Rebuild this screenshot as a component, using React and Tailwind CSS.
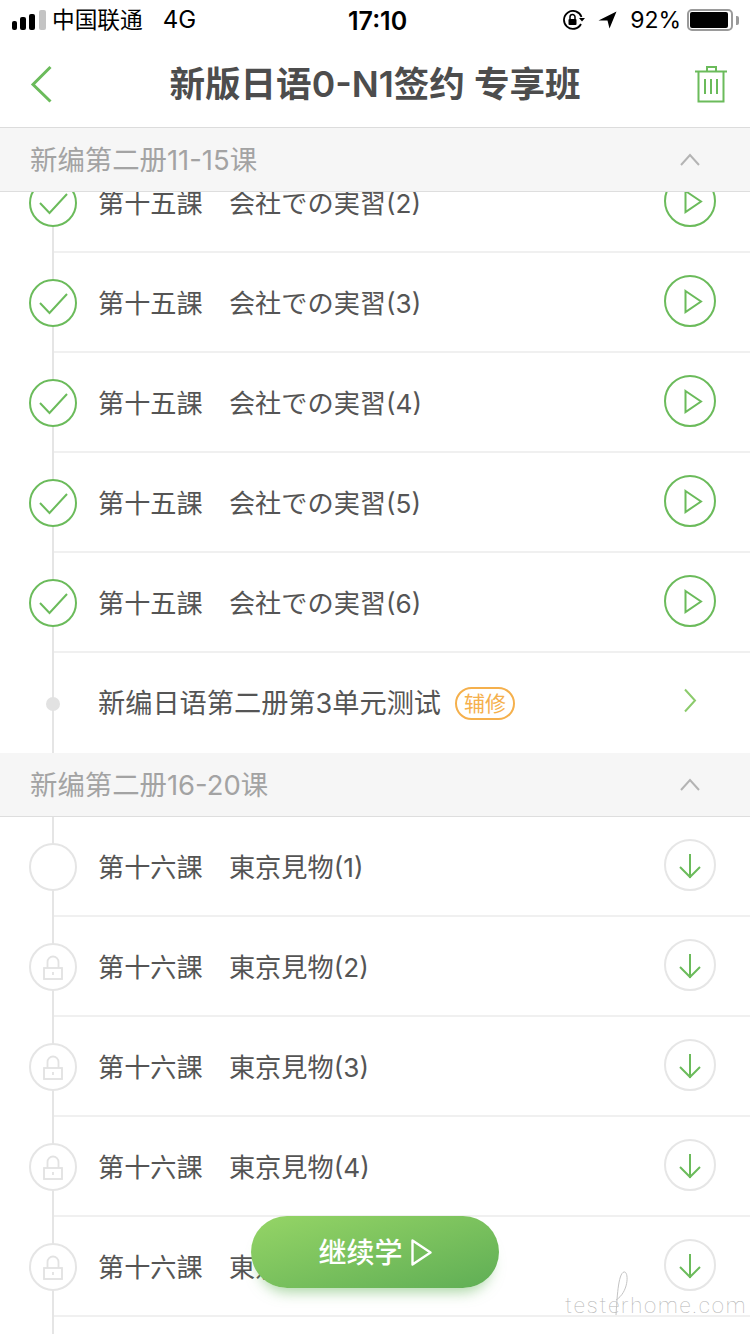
const SANS = 'font-["Inter","Noto_Sans_CJK_SC",sans-serif]';

const StatusBar = () => (
  <div className="flex h-[40px] items-center text-black relative">
    <div className="flex items-end gap-[3px] ml-[12px] h-[20px] mb-[1px]">
      <div className="w-[5px] h-[9px] rounded-[2px] bg-black" />
      <div className="w-[6px] h-[13px] rounded-[2px] bg-black" />
      <div className="w-[6px] h-[16px] rounded-[2px] bg-black" />
      <div className="w-[7px] h-[20px] ml-[1px] rounded-[2px] bg-[#c4c4c4]" />
    </div>
    <span className="ml-[6px] text-[22.7px] leading-none">中国联通</span>
    <span className="ml-[20px] text-[24px] leading-none">4G</span>
    <span className="absolute left-[348px] top-[8px] text-[25px] leading-[26px] font-semibold">17:10</span>
    <div className="ml-auto flex items-center mr-[11px]">
      <svg width="24" height="20" viewBox="0 0 24 20" fill="none">
        <path d="M19.5 7A9 9 0 1 0 19 14" stroke="#000" strokeWidth="1.8" />
        <path d="M17 8h6l-3 3.5z" fill="#000" />
        <rect x="6.5" y="9" width="8" height="6" rx="1" fill="#000" />
        <path d="M8 9V7a2.5 2.5 0 0 1 5 0v2" stroke="#000" strokeWidth="1.5" />
      </svg>
      <svg className="ml-[12px]" width="19" height="18" viewBox="0 0 19 18">
        <path d="M0.5 9.5 18.5 0.5 11.5 17.5 9.5 9.5z" fill="#000" />
      </svg>
      <span className="ml-[13px] text-[23px] leading-none">92%</span>
      <div className="ml-[6px] w-[46px] h-[22px] rounded-[5px] border-2 border-[#9a9a9a] p-[1px]">
        <div className="w-[38px] h-full rounded-[2px] bg-black" />
      </div>
      <div className="ml-[3px] w-[3px] h-[9px] rounded-r-[2px] bg-[#9a9a9a]" />
    </div>
  </div>
);

const NavBar = () => (
  <div className="flex h-[88px] items-center justify-center relative border-b border-[#dcdcdc] bg-white">
    <svg className="absolute left-[30px] top-[25px]" width="24" height="38" viewBox="0 0 24 38" fill="none">
      <path d="M20.5 2 3 19.5 20.5 36.5" stroke="#6bbb5b" strokeWidth="3" />
    </svg>
    <h1 className="text-[35.6px] leading-none font-semibold text-[#4d4d4d] pt-[2px]">新版日语0-N1签约 专享班</h1>
    <svg className="absolute left-[695px] top-[26px]" width="32" height="37" viewBox="0 0 32 37" fill="none" stroke="#6bbb5b" strokeWidth="2">
      <path d="M12 5V1h9v4" />
      <path d="M0 5.5h32" />
      <path d="M3.5 5.5V35.5h25V5.5" />
      <path d="M10 13v15M16 13v15M22 13v15" />
    </svg>
  </div>
);

const SectionHeader = ({ title, className = '' }) => (
  <div className={`relative z-20 flex h-[64px] items-center justify-between bg-[#f6f6f6] border-b border-[#dedede] pl-[30px] pr-[50px] ${className}`}>
    <span className="text-[27.4px] leading-none text-[#a3a3a3] pt-[2px]">{title}</span>
    <svg width="20" height="13" viewBox="0 0 20 13" fill="none">
      <path d="M1 12 10 2l9 10" stroke="#b4b4b4" strokeWidth="2" />
    </svg>
  </div>
);

const DoneMark = () => (
  <div className="relative z-10 shrink-0 w-[48px] h-[48px] -ml-[24px] rounded-full bg-white border-2 border-[#6bbb5b]">
    <svg className="-m-[2px]" width="48" height="48" viewBox="0 0 48 48" fill="none">
      <path d="M11 24l9.5 10L38 15" stroke="#6bbb5b" strokeWidth="2" />
    </svg>
  </div>
);

const EmptyMark = () => (
  <div className="relative z-10 shrink-0 w-[48px] h-[48px] -ml-[24px] rounded-full bg-white border-2 border-[#e5e5e5]" />
);

const LockMark = () => (
  <div className="relative z-10 shrink-0 w-[48px] h-[48px] -ml-[24px] rounded-full bg-white border-2 border-[#e5e5e5]">
    <svg className="-m-[2px]" width="48" height="48" viewBox="0 0 48 48" fill="none" stroke="#e2e2e2" strokeWidth="1.8">
      <rect x="15" y="25" width="18" height="11" />
      <path d="M18.5 25v-6a5.5 5.5 0 0 1 11 0v6" />
      <path d="M24 29v3" />
    </svg>
  </div>
);

const PlayButton = () => (
  <div className="shrink-0 ml-auto mr-[34px] mb-[4px] w-[52px] h-[52px] rounded-full border-2 border-[#6bbb5b]">
    <svg className="-m-[2px]" width="52" height="52" viewBox="0 0 52 52" fill="none">
      <path d="M21.5 16 37 26.5 21.5 37z" stroke="#6bbb5b" strokeWidth="2" />
    </svg>
  </div>
);

const DownloadButton = () => (
  <div className="shrink-0 ml-auto mr-[34px] mb-[4px] w-[52px] h-[52px] rounded-full border-2 border-[#e6e6e6]">
    <svg className="-m-[2px]" width="52" height="52" viewBox="0 0 52 52" fill="none" stroke="#6bbb5b" strokeWidth="2">
      <path d="M26 15v24" />
      <path d="M16 28l10 10 10-10" />
    </svg>
  </div>
);

const Row = ({ mark, title, action, className = '' }) => (
  <div className={`relative flex items-center h-[100px] ml-[53px] pt-[2px] border-b-2 border-[#f0f0f0] ${className}`}>
    <div className="absolute -left-px top-0 -bottom-[2px] w-[2px] bg-[#e5e5e5]" />
    {mark}
    <span className="ml-[21px] text-[26.2px] leading-none text-[#555] pt-[3px]">{title}</span>
    {action}
  </div>
);

const App = () => {
  const done = [2, 3, 4, 5, 6];
  const pending = [1, 2, 3, 4, 5];

  return (
    <div className={`relative w-[750px] h-[1334px] overflow-hidden bg-white ${SANS}`}>
      <StatusBar />
      <NavBar />
      <SectionHeader title="新编第二册11-15课" />

      {done.map((n, i) => (
        <Row
          key={n}
          className={i === 0 ? '-mt-[39px]' : ''}
          mark={<DoneMark />}
          title={`第十五課　会社での実習(${n})`}
          action={<PlayButton />}
        />
      ))}

      <div className="relative flex items-center h-[100px] ml-[53px]">
        <div className="absolute -left-px inset-y-0 w-[2px] bg-[#e5e5e5]" />
        <div className="relative z-10 -ml-[7px] w-[14px] h-[14px] mt-[2px] rounded-full bg-[#e2e2e2]" />
        <span className="ml-[38px] text-[27.2px] leading-none text-[#555] pt-[1px]">新编日语第二册第3单元测试</span>
        <span className="ml-[14px] flex items-center justify-center w-[60px] h-[33px] rounded-full border-2 border-[#f5b04c] text-[21px] leading-none text-[#f5b04c]">辅修</span>
        <svg className="ml-auto mr-[53px] -mt-[5px]" width="14" height="25" viewBox="0 0 14 25" fill="none">
          <path d="M2 1.5 12 12.5 2 23.5" stroke="#8ccb6c" strokeWidth="2" />
        </svg>
      </div>

      <SectionHeader title="新编第二册16-20课" />

      {pending.map((n, i) => (
        <Row
          key={n}
          mark={i === 0 ? <EmptyMark /> : <LockMark />}
          title={`第十六課　東京見物(${n})`}
          action={<DownloadButton />}
        />
      ))}
      <div className="ml-[52px] w-[2px] h-[18px] bg-[#e5e5e5]" />

      {/* floating resume button */}
      <button className="absolute left-[251px] top-[1216px] z-30 flex items-center justify-center gap-[8px] w-[248px] h-[72px] rounded-full bg-gradient-to-br from-[#95d566] to-[#5fae55] shadow-[0_12px_14px_-8px_rgba(98,178,87,0.55)] text-white text-[28px] font-medium">
        <span className="pt-[2px]">继续学</span>
        <svg width="21" height="27" viewBox="0 0 21 27" fill="none">
          <path d="M1.5 1.5 19.5 13.5 1.5 25.5z" stroke="#fff" strokeWidth="2.4" strokeLinejoin="round" />
        </svg>
      </button>

      {/* watermark */}
      <div className="absolute left-[565px] top-[1294px] z-30 font-['Roboto',sans-serif] font-thin text-[22px] leading-[24px] tracking-[1.8px] text-[#b5b5b5]">
        testerhome.com
      </div>
      <svg className="absolute left-[612px] top-[1270px] z-30" width="20" height="46" viewBox="0 0 20 46" fill="none">
        <path d="M4 45C5 30 6 3 12 2c5-1 5 20-8 28" stroke="#c4c4c4" strokeWidth="1" />
      </svg>
    </div>
  );
};

export default App;
